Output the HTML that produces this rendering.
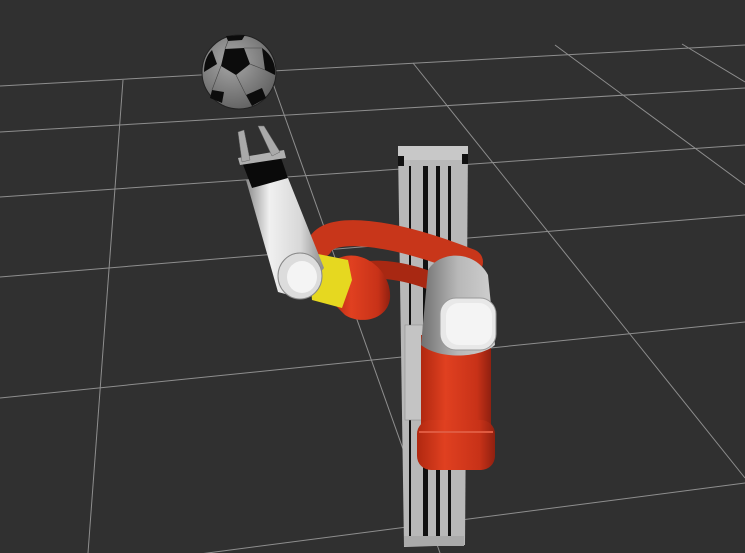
<!DOCTYPE html>
<html><head><meta charset="utf-8"><style>html,body{margin:0;padding:0;background:#303030;overflow:hidden}svg{display:block}</style></head>
<body>
<svg width="745" height="553" viewBox="0 0 745 553" xmlns="http://www.w3.org/2000/svg">
<defs>
<radialGradient id="ball" cx="0.4" cy="0.35" r="0.7"><stop offset="0" stop-color="#a8a8a8"/><stop offset="1" stop-color="#606060"/></radialGradient>
<linearGradient id="white" x1="0" y1="0" x2="1" y2="0"><stop offset="0" stop-color="#8a8a8a"/><stop offset="0.3" stop-color="#f0f0f0"/><stop offset="0.7" stop-color="#d8d8d8"/><stop offset="1" stop-color="#8a8a8a"/></linearGradient>
<linearGradient id="red" x1="0" y1="0" x2="1" y2="0"><stop offset="0" stop-color="#b02810"/><stop offset="0.35" stop-color="#e04020"/><stop offset="0.8" stop-color="#c83218"/><stop offset="1" stop-color="#902010"/></linearGradient>
<linearGradient id="gray" x1="0" y1="0" x2="1" y2="0"><stop offset="0" stop-color="#707070"/><stop offset="0.5" stop-color="#b8b8b8"/><stop offset="1" stop-color="#d0d0d0"/></linearGradient>
</defs>
<rect width="745" height="553" fill="#303030"/>
<g stroke="#8e8e8e" stroke-width="1" fill="none">
<line x1="0" y1="86" x2="745" y2="45"/>
<line x1="0" y1="132" x2="745" y2="88"/>
<line x1="0" y1="197" x2="745" y2="145"/>
<line x1="0" y1="277" x2="745" y2="215"/>
<line x1="0" y1="398" x2="745" y2="322"/>
<line x1="0" y1="580" x2="745" y2="483"/>
<line x1="123" y1="80" x2="88" y2="553"/>
<line x1="270" y1="75" x2="440" y2="553"/>
<line x1="413" y1="63" x2="745" y2="478"/>
<line x1="555" y1="45" x2="745" y2="185"/>
<line x1="682" y1="44" x2="745" y2="82"/>
</g>
<!-- column -->
<polygon points="398,148 468,146 465,545 404,547" fill="#b8b8b8"/>
<rect x="398" y="146" width="70" height="14" fill="#c8c8c8"/>
<rect x="398" y="156" width="6" height="10" fill="#111"/><rect x="462" y="154" width="6" height="10" fill="#111"/>
<g fill="#111"><polygon points="423,166 428,166 428,545 423,545"/><polygon points="436,166 440,166 440,545 436,545"/><polygon points="448,166 451,166 451,545 448,545"/><polygon points="409,166 411,166 411,545 409,545"/></g>
<rect x="405" y="325" width="18" height="95" fill="#c4c4c4" stroke="#888" stroke-width="0.5"/>
<rect x="404" y="536" width="60" height="10" fill="#aaa"/>
<!-- shoulder arm loops -->
<path d="M320,245 C330,225 390,230 470,262" stroke="#c8361a" stroke-width="26" fill="none" stroke-linecap="round"/>
<path d="M370,270 C390,268 420,275 440,285" stroke="#a82812" stroke-width="18" fill="none"/>
<!-- lower cylinder -->
<rect x="421" y="335" width="70" height="100" fill="url(#red)"/>
<rect x="417" y="420" width="78" height="50" rx="14" fill="url(#red)"/>
<line x1="419" y1="432" x2="493" y2="432" stroke="#e05a40" stroke-width="2"/>
<!-- shoulder joint -->
<path d="M428,270 C440,250 475,250 488,275 L495,345 C480,358 440,360 421,345 Z" fill="url(#gray)"/>
<rect x="440" y="298" width="56" height="52" rx="16" fill="#e8e8e8" stroke="#999"/>
<rect x="446" y="303" width="46" height="42" rx="13" fill="#f4f4f4"/>
<!-- red elbow blob -->
<path d="M335,260 C360,245 392,270 390,298 C388,320 360,325 345,315 L330,300 Z" fill="url(#red)"/>
<!-- yellow -->
<polygon points="308,252 348,260 352,280 342,308 312,300" fill="#e6d820"/>
<!-- white forearm -->
<polygon points="246,180 284,168 324,268 300,298 278,292" fill="url(#white)"/>
<ellipse cx="300" cy="276" rx="22" ry="23" fill="#dcdcdc" stroke="#888"/>
<ellipse cx="302" cy="277" rx="15" ry="16" fill="#f4f4f4"/>
<!-- wrist -->
<polygon points="242,162 280,155 288,178 252,188" fill="#0a0a0a"/>
<polygon points="238,158 284,150 286,158 240,165" fill="#b0b0b0"/>
<polygon points="238,132 244,130 250,160 242,162" fill="#aaa" stroke="#666" stroke-width="0.5"/>
<polygon points="258,126 264,126 280,152 272,156" fill="#aaa" stroke="#666" stroke-width="0.5"/>
<!-- ball -->
<circle cx="239" cy="72" r="37" fill="url(#ball)" stroke="#222"/>
<g fill="#0c0c0c">
<polygon points="225,49 244,48 250,64 236,75 221,66"/>
<path d="M262,48 C272,55 276,65 275,75 L265,70 Z"/>
<path d="M204,72 C204,62 207,55 212,50 L217,64 Z"/>
<polygon points="246,95 262,88 266,98 252,106"/>
<polygon points="212,90 224,92 222,103 210,98"/>
<path d="M226,36 L245,35 L242,40 L228,41 Z"/>
</g>
<g stroke="#444" stroke-width="0.6" fill="none">
<path d="M221,66 L212,90 M250,64 L265,70 M236,75 L246,95 M225,49 L228,41 M244,48 L262,48"/>
</g>
</svg>
</body></html>
